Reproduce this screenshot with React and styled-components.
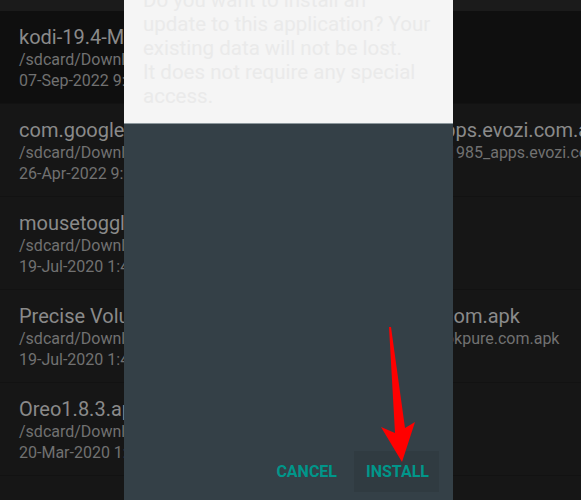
import React from 'react';
import styled, { createGlobalStyle } from 'styled-components';

const Global = createGlobalStyle`
  html, body {
    margin: 0;
    padding: 0;
    background: #161616;
    font-family: Roboto, "Noto Sans", "Liberation Sans", sans-serif;
  }
`

const Screen = styled.div`
  position: relative;
  width: 100%;
  height: 500px;
  overflow: hidden;
  background: #161616;
`

const TopStrip = styled.div`
  height: 11px;
  background: #1b1b1b;
`

const Row = styled.div`
  height: 93px;
  box-sizing: border-box;
  padding: 14px 0 0 19px;
  background: ${p => (p.selected ? '#0f0f0f' : '#161616')};
  border-bottom: 1px solid #121212;
  white-space: nowrap;
  overflow: hidden;
`

const Title = styled.div`
  font-size: 20px;
  line-height: 24px;
  color: #8a8a8a;
`

const Meta = styled.div`
  font-size: 16px;
  line-height: 21px;
  color: #717171;
  &:first-of-type {
    margin-top: 4px;
  }
`

const Dialog = styled.div`
  position: absolute;
  top: 0;
  bottom: 0;
  left: 124px;
  width: 329px;
  display: flex;
  flex-direction: column;
  background: #344047;
`

const Message = styled.div`
  height: 124px;
  box-sizing: border-box;
  display: flex;
  flex-direction: column;
  justify-content: flex-end;
  overflow: hidden;
  padding: 0 10px 15px 19px;
  background: #f5f5f5;
  border-bottom: 1px solid #8d989d;
  color: #eaeaea;
  font-size: 20.5px;
  line-height: 24px;
`

const Line = styled.div`
  white-space: nowrap;
`

const ButtonBar = styled.div`
  margin-top: auto;
  display: flex;
  justify-content: flex-end;
  gap: 7px;
  padding: 0 14px 8px 0;
`

const Button = styled.div`
  height: 41px;
  padding: 0 10px 0 12px;
  display: flex;
  align-items: center;
  font-size: 16px;
  font-weight: 700;
  color: #00968a;
  background: ${p => (p.focused ? '#303b41' : 'transparent')};
`

const Pointer = styled.svg`
  position: absolute;
  left: 0;
  top: 0;
  pointer-events: none;
`

const files = [
  {
    name: 'kodi-19.4-Matrix-armeabi-v7a.apk',
    date: '07-Sep-2022 9:12 PM',
    selected: true,
  },
  {
    name: 'com.google.android.tvrecommendation_1985_apps.evozi.com.apk',
    date: '26-Apr-2022 9:30 AM',
  },
  {
    name: 'mousetoggle-1.0.apk',
    date: '19-Jul-2020 1:46 PM',
  },
  {
    name: 'Precise Volume + Equalizer_v1.18.125_apkpure.com.apk',
    date: '19-Jul-2020 1:47 PM',
  },
  {
    name: 'Oreo1.8.3.apk',
    date: '20-Mar-2020 1:05 PM',
  },
]

export default function App() {
  return (
    <Screen>
      <Global />
      <TopStrip />
      {files.map(f => (
        <Row key={f.name} selected={f.selected}>
          <Title>{f.name}</Title>
          <Meta>/sdcard/Download/{f.name}</Meta>
          <Meta>{f.date}</Meta>
        </Row>
      ))}

      <Dialog>
        <Message>
          <Line>Do you want to install an</Line>
          <Line>update to this application? Your</Line>
          <Line>existing data will not be lost.</Line>
          <Line>It does not require any special</Line>
          <Line>access.</Line>
        </Message>
        <ButtonBar>
          <Button>CANCEL</Button>
          <Button focused>INSTALL</Button>
        </ButtonBar>
      </Dialog>

      <Pointer width="581" height="500" viewBox="0 0 581 500">
        <polygon
          points="389,327 391,327 405,428 415,422 402,462 381,427 395,433"
          fill="#ff0000"
        />
      </Pointer>
    </Screen>
  );
}
